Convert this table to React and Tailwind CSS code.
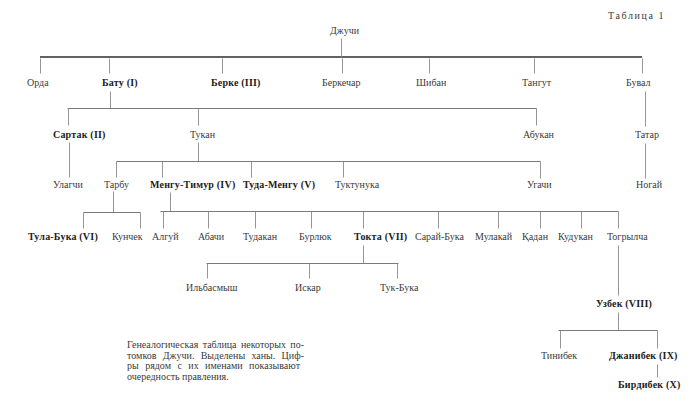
import React from "react";

// names on the tree: [text, left x, centre y, bold]
const names = [
  ["Джучи", 330, 31],
  ["Орда", 27, 83],
  ["Бату (I)", 102, 83, true],
  ["Берке (III)", 211, 83, true],
  ["Беркечар", 322, 83],
  ["Шибан", 416, 83],
  ["Тангут", 522, 83],
  ["Бувал", 626, 83],
  ["Сартак (II)", 53, 135, true],
  ["Тукан", 190, 135],
  ["Абукан", 523, 135],
  ["Татар", 635, 135],
  ["Улагчи", 53, 185],
  ["Тарбу", 104, 185],
  ["Менгу-Тимур (IV)", 150, 185, true],
  ["Туда-Менгу (V)", 243, 185, true],
  ["Туктунука", 335, 185],
  ["Угачи", 527, 185],
  ["Ногай", 636, 185],
  ["Тула-Бука (VI)", 28, 237, true],
  ["Кунчек", 112, 237],
  ["Алгуй", 152, 237],
  ["Абачи", 198, 237],
  ["Тудакан", 243, 237],
  ["Бурлюк", 299, 237],
  ["Токта (VII)", 354, 237, true],
  ["Сарай-Бука", 415, 237],
  ["Мулакай", 475, 237],
  ["Қадан", 522, 237],
  ["Кудукан", 558, 237],
  ["Тогрылча", 607, 237],
  ["Ильбасмыш", 186, 288],
  ["Искар", 295, 288],
  ["Тук-Бука", 380, 288],
  ["Узбек (VIII)", 596, 304, true],
  ["Тинибек", 541, 356],
  ["Джанибек (IX)", 609, 356, true],
  ["Бирдибек (X)", 618, 385, true],
];

// connector lines: [x1, y1, x2, y2]
const lines = [
  [341, 38, 341, 57],
  [40, 58, 40, 73], [109, 58, 109, 73], [222, 58, 222, 73], [342, 58, 342, 73],
  [429, 58, 429, 73], [534, 58, 534, 73], [642, 58, 642, 73],
  [110, 91, 110, 108],
  [67, 108, 536, 108],
  [68, 108, 68, 125], [198, 108, 198, 125], [536, 108, 536, 125],
  [645, 91, 645, 126],
  [645, 143, 645, 178],
  [69, 142, 69, 177],
  [198, 142, 198, 161],
  [116, 161, 540, 161],
  [116, 161, 116, 177], [162, 161, 162, 177], [251, 161, 251, 177], [343, 161, 343, 177], [540, 161, 540, 178],
  [113, 191, 113, 212],
  [83, 212, 140, 212],
  [83, 212, 83, 228], [140, 212, 140, 228],
  [170, 192, 170, 211],
  [160, 211, 618, 211],
  [163, 211, 163, 228], [208, 211, 208, 228], [255, 211, 255, 228], [311, 211, 311, 228],
  [363, 211, 363, 228], [438, 211, 438, 228], [498, 211, 498, 228], [540, 211, 540, 228],
  [581, 211, 581, 228], [618, 211, 618, 228],
  [363, 245, 363, 263],
  [206, 263, 398, 263],
  [207, 263, 207, 278], [309, 263, 309, 278], [397, 263, 397, 278],
  [618, 245, 618, 295],
  [618, 312, 618, 330],
  [558, 330, 657, 330],
  [560, 330, 560, 348], [657, 330, 657, 348],
  [657, 364, 657, 377],
];

const Name = ({ text, x, y, bold }) => (
  <span
    className={
      bold
        ? "absolute -translate-y-1/2 whitespace-nowrap text-[10px] leading-none font-bold text-[#1c1c1c] tracking-[0.2px]"
        : "absolute -translate-y-1/2 whitespace-nowrap text-[10px] leading-none text-[#3a3a3a]"
    }
    style={{ left: x, top: y }}>
    {text}
  </span>
);

const App = () => {
  return (
    <div className="relative w-[700px] h-[406px] bg-white overflow-hidden [font-family:'Liberation_Serif',serif]">
      {/* connectors */}
      <svg className="absolute inset-0" width="700" height="406" viewBox="0 0 700 406">
        <line x1="40" y1="57" x2="642" y2="57" stroke="#2e2e2e" strokeWidth="1.6" />
        {lines.map(([x1, y1, x2, y2], i) => (
          <line
            key={i}
            x1={x1 + 0.5}
            y1={y1 + 0.5}
            x2={x2 + 0.5}
            y2={y2 + 0.5}
            stroke={y1 === y2 ? "#6b6b6b" : "#8a8a8a"}
            strokeWidth="0.9"
          />
        ))}
      </svg>

      <span className="absolute left-[608px] top-[11px] text-[10px] leading-none tracking-[1.6px] text-[#3a3a3a] whitespace-nowrap">
        Таблица 1
      </span>

      {names.map(([text, x, y, bold]) => (
        <Name key={text} text={text} x={x} y={y} bold={bold} />
      ))}

      {/* caption */}
      <div className="absolute left-[127px] top-[340px] w-[177px] text-[10px] leading-[10.5px] text-[#3a3a3a]">
        <div className="text-justify [text-align-last:justify]">Генеалогическая таблица некоторых по-</div>
        <div className="text-justify [text-align-last:justify]">томков Джучи. Выделены ханы. Циф-</div>
        <div className="text-justify [text-align-last:justify] pr-[4px]">ры рядом с их именами показывают</div>
        <div>очередность правления.</div>
      </div>
    </div>
  );
};

export default App;
